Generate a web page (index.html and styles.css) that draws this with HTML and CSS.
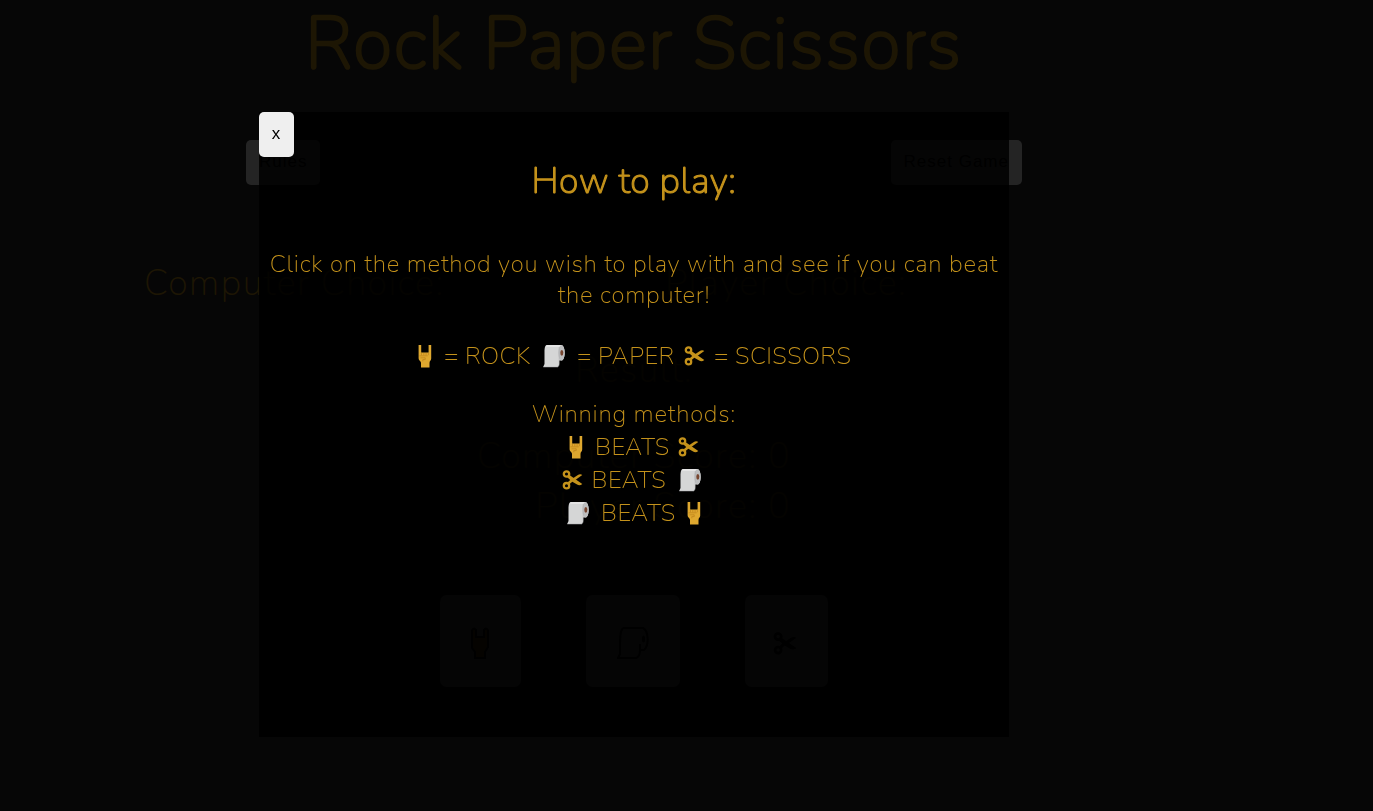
FILE: index.html
```html
<!DOCTYPE html>
<html lang="en">
<head>
<meta charset="utf-8">
<title>Rock Paper Scissors</title>
<link rel="stylesheet" href="styles.css">
</head>
<body>
<svg class="defs" width="0" height="0" aria-hidden="true">
  <symbol id="hand" viewBox="0 0 14 24">
    <path fill="#dfa82f" d="M.6 1h2.6v7.6h7.4V1h2.6v13.6c0 2-1.7 2.4-1.7 4.3V23.4H3v-4.5C3 17 .6 16.8.6 14z"/>
    <path fill="none" stroke="#b77b18" stroke-width=".6" d="M3.5 9v2.2M5.8 9v2.2M8.1 9v2.2M10.4 9v2.2M1.5 11.8h8.2M2.5 13.8h4.7v1.8H4.8v1.7"/>
  </symbol>
  <symbol id="roll" viewBox="0 0 22 24">
    <path fill="#d5d6d6" d="M4 .9h14.3c2 0 3.4 3.5 3.4 7.8s-1.3 7.8-3.3 7.8h-2.2v3.3c0 1.5-.7 2.8-1.6 3.3H.2l1.3-3V7.5C1.5 3.5 2.2.9 4 .9z"/>
    <path fill="#e5e5e5" d="M4 .9h14L16.5 3H3z"/>
    <ellipse cx="18.5" cy="8.8" rx="3.2" ry="7.6" fill="#bdbebf"/>
    <ellipse cx="18.8" cy="8.8" rx="1.5" ry="2.9" fill="#77452f"/>
    <path fill="none" stroke="#a9abad" stroke-width=".5" d="M.2 23h14.4c1-.5 1.6-1.8 1.6-3.3V3"/>
  </symbol>
  <symbol id="scissors" viewBox="0 0 20 20">
    <g fill="none" stroke="currentColor" stroke-width="2.3"><circle cx="4" cy="4" r="2.7"/><circle cx="4" cy="15.7" r="2.7"/></g>
    <path fill="currentColor" d="M6.2 4.6 19.8 14c-1.6 1.5-3.5 1.6-5.2.6L9.8 11.7l-3.5 3-1.6-1.9 3-2.7-3-2.8zM10.5 8.3l4.5-3c1.7-1.2 3.3-1.4 4.8-.3l-7 5z"/>
  </symbol>
  <symbol id="hand-line" viewBox="0 0 20 32">
    <path fill="#f0b020" stroke="#000" stroke-width="2" d="M2 3.5Q3.5 0 6 3v7h8V3q2.5-3 4 .5V20l-3 5v6H5v-6l-3-4z"/>
  </symbol>
  <symbol id="roll-line" viewBox="0 0 32 32">
    <path fill="none" stroke="#000" stroke-width="2" d="M6 1h20c6 3 6 18 1 22h-4V17M6 1C3 4 3 11 3 27l-2 4h18c3-1 4-4 4-8"/>
    <ellipse cx="26.5" cy="12" rx="1.5" ry="3.5" fill="#000"/>
  </symbol>
</svg>

<main class="game">
  <h1 class="title">Rock Paper Scissors</h1>
  <div class="controls">
    <button class="btn">Rules</button>
    <button class="btn">Reset Game</button>
  </div>
  <div class="choices">
    <p class="label choice-cpu">Computer Choice:</p>
    <p class="label choice-player">Player Choice:</p>
  </div>
  <p class="label result">Result:</p>
  <div class="scores">
    <p class="label">Computer Score: 0</p>
    <p class="label">Player Score: 0</p>
  </div>
  <div class="moves">
    <button class="move move-rock"><svg width="20" height="32"><use href="#hand-line"/></svg></button>
    <button class="move move-paper"><svg width="32" height="32"><use href="#roll-line"/></svg></button>
    <button class="move move-scissors"><svg width="24" height="23"><use href="#scissors"/></svg></button>
  </div>
</main>

<div class="overlay">
  <section class="modal">
    <button class="btn close">x</button>
    <h2 class="heading">How to play:</h2>
    <div class="intro">
      <p>Click on the method you wish to play with and see if you can beat</p>
      <p>the computer!</p>
    </div>
    <div class="row legend">
      <svg class="hand"><use href="#hand"/></svg><span class="t-rock">= ROCK</span>
      <svg class="roll"><use href="#roll"/></svg><span class="t-paper">= PAPER</span>
      <svg class="scissors"><use href="#scissors"/></svg><span class="t-scissors">= SCISSORS</span>
    </div>
    <p class="winning">Winning methods:</p>
    <div class="row beats-a"><svg class="hand"><use href="#hand"/></svg><span class="t-beats">BEATS</span><svg class="scissors"><use href="#scissors"/></svg></div>
    <div class="row beats-b"><svg class="scissors"><use href="#scissors"/></svg><span class="t-beats">BEATS</span><svg class="roll"><use href="#roll"/></svg></div>
    <div class="row beats-c"><svg class="roll"><use href="#roll"/></svg><span class="t-beats">BEATS</span><svg class="hand"><use href="#hand"/></svg></div>
  </section>
</div>
</body>
</html>
```
FILE: styles.css
```css
* { box-sizing: border-box; }
body {
  margin: 0;
  height: 811px;
  overflow: hidden;
  background: #282828;
  color: #c4921b;
  font-family: Nunito, Lato, sans-serif;
  font-weight: 200;
}
h1, h2, p { margin: 0; font-weight: inherit; white-space: nowrap; }
.defs { position: absolute; }
button { border: 0; padding: 0; background: #efefef; color: #000; }

.game { width: 1268px; }
.title { height: 88px; text-align: center; font-size: 72px; line-height: 88px; letter-spacing: 1.75px; -webkit-text-stroke: 2.6px #c4921b; }
.controls { display: flex; justify-content: space-between; width: 776px; margin: 52px auto 0; }
.btn { height: 45px; padding: 0 13px 1px; border-radius: 5px; font: 17px "Liberation Sans", Arial, sans-serif; letter-spacing: 1px; white-space: nowrap; }
.label { height: 50px; font-size: 36px; line-height: 50px; letter-spacing: 1.5px; }
.choices { display: flex; padding-left: 144px; margin-top: 74px; }
.choice-cpu { width: 521px; }
.result { margin-top: 37px; text-align: center; }
.scores { width: 791px; margin-top: 36px; text-align: right; }
.moves { display: flex; gap: 65px; margin: 63px 0 0 440px; }
.move { display: flex; align-items: center; justify-content: center; height: 92px; border-radius: 7px; padding-top: 4px; }
.move-rock { width: 81px; padding-right: 2px; }
.move-paper { width: 94px; padding-right: 1px; }
.move-scissors { width: 83px; padding-right: 3px; }

.overlay { position: absolute; inset: 0; padding: 112px 0 0 259px; background: rgba(0, 0, 0, .85); }
.modal { width: 750px; height: 625px; background: rgba(0, 0, 0, .85); font-size: 24px; text-align: center; letter-spacing: .75px; will-change: transform; }
.close { display: block; width: 35px; padding: 0 1px 2px 0; letter-spacing: 0; }
.heading { height: 50px; font-size: 36px; line-height: 50px; letter-spacing: .5px; -webkit-text-stroke: 1.1px #c4921b; }
.intro { padding-top: 42px; line-height: 31px; }
.row { display: flex; justify-content: center; align-items: center; height: 33px; line-height: 33px; white-space: nowrap; text-align: left; letter-spacing: .4px; }
.row svg { flex: none; }
.row .hand { width: 14px; height: 24px; margin-top: -1px; }
.row .roll { width: 22px; height: 24px; margin-top: -2px; }
.row .scissors { width: 21px; height: 20px; margin-left: -1px; margin-top: -1px; }
.legend { margin-top: 29px; padding-left: 2px; }
.t-rock { width: 86px; margin: 0 13px 0 12px; }
.t-paper { width: 98px; margin: 0 10px 0 12px; }
.t-scissors { width: 138px; margin-left: 9px; }
.winning { margin-top: 25px; height: 33px; line-height: 33px; }
.t-beats { width: 74px; }
.beats-a { gap: 11px; }
.beats-a .t-beats { margin-left: 1px; width: 73px; }
.beats-b { gap: 10px; padding-right: 5px; }
.beats-b .t-beats { margin-left: -1px; width: 75px; }
.beats-b .roll { margin-left: 2px; }
.beats-c { gap: 12px; }
.beats-c .t-beats { width: 74px; }
```
